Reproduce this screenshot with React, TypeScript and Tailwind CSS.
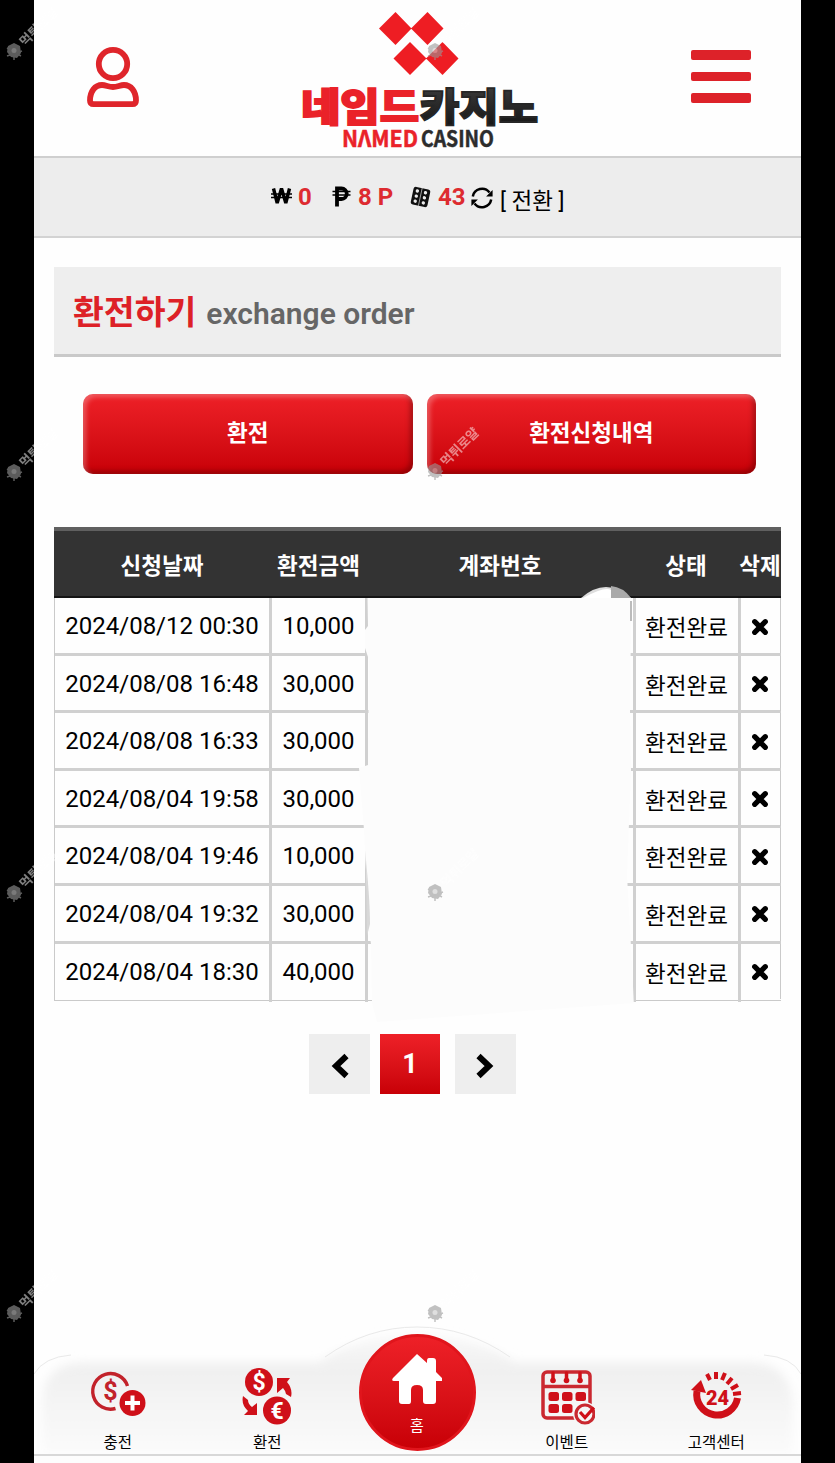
import type { ReactNode } from "react";

const orders = [
	{ date: "2024/08/12 00:30", amount: "10,000" },
	{ date: "2024/08/08 16:48", amount: "30,000" },
	{ date: "2024/08/08 16:33", amount: "30,000" },
	{ date: "2024/08/04 19:58", amount: "30,000" },
	{ date: "2024/08/04 19:46", amount: "10,000" },
	{ date: "2024/08/04 19:32", amount: "30,000" },
	{ date: "2024/08/04 18:30", amount: "40,000" },
];

export default function App() {
	return (
		<div className="relative h-[1463px] w-[835px] overflow-hidden bg-black pr-[34px] pl-[34px] font-['Roboto','Noto_Sans_CJK_KR',sans-serif] text-black">
			<div className="flex h-full w-[767px] flex-col bg-[#fefefe]">
				<Header />
				<BalanceBar />
				<main className="flex flex-1 flex-col pt-[29px] pr-5 pl-5">
					<div className="flex h-[90px] items-baseline border-b-3 border-[#c9c9c9] bg-[#eeeeee] pl-[19px] leading-[92px] whitespace-nowrap">
						<h1 className="text-[33.5px] font-bold text-[#dd2127]">환전하기</h1>
						<span className="ml-[10px] text-[30px] font-semibold text-[#666]">
							exchange order
						</span>
					</div>
					<div className="mt-[37px] flex gap-[14px] pl-[29px]">
						<RedButton>환전</RedButton>
						<RedButton>환전신청내역</RedButton>
					</div>
					<OrderTable />
					<Pagination />
				</main>
				<BottomNav />
			</div>

			<Watermark className="top-[-4px] left-[2px]" />
			<Watermark className="top-[417px] left-[2px]" />
			<Watermark className="top-[838px] left-[2px]" />
			<Watermark className="top-[1258px] left-[2px]" />
			<Watermark className="top-[-4px] left-[423px]" />
			<Watermark className="top-[416px] left-[423px]" />
			<Watermark className="top-[837px] left-[423px]" />
			<Watermark className="top-[1258px] left-[423px]" />
		</div>
	);
}

function Header() {
	return (
		<header className="flex h-[158px] items-start justify-between border-b-2 border-[#cfcfcf] pr-[50px] pl-[52px]">
			<svg
				className="mt-[46px] h-[62px] w-[54px]"
				viewBox="0 0 54 62"
				fill="none"
				stroke="#df252b"
			>
				<circle cx="27" cy="18" r="14.2" strokeWidth="5.8" />
				<path
					d="M4 54.5c0-9 5-15.5 12-15.5 4 0 6.5 2 11 2s7-2 11-2c7 0 12 6.5 12 15.5 0 2.5-1 3.7-3.5 3.7h-39c-2.5 0-3.5-1.2-3.5-3.7Z"
					strokeWidth="5.8"
				/>
			</svg>
			<Logo />
			<div className="mt-[50px] flex flex-col gap-3">
				<span className="h-[9.5px] w-[60px] rounded-xs bg-[#dd2229]" />
				<span className="h-[9.5px] w-[60px] rounded-xs bg-[#dd2229]" />
				<span className="h-[9.5px] w-[60px] rounded-xs bg-[#dd2229]" />
			</div>
		</header>
	);
}

function Logo() {
	return (
		<svg className="ml-[9px] h-[156px] w-[244px]" viewBox="298 0 244 156">
			<defs>
				<linearGradient id="logoDark" x1="0" y1="0" x2="0" y2="1">
					<stop offset="0" stopColor="#444" />
					<stop offset="0.5" stopColor="#2a2a2a" />
					<stop offset="1" stopColor="#111" />
				</linearGradient>
			</defs>
			<g fill="#ee1d23">
				<path d="m395.5 12 16 16.5-16 16.5-16.5-16.5ZM427.5 12l16 16.5-16 16.5-16.5-16.5Z" />
				<path d="m410 42 16.5 16.5L410 75l-16.5-16.5ZM442.5 42l16 16.5-16 16.5L426 58.5Z" />
			</g>
			<g
				fontFamily="'Noto Sans CJK KR', sans-serif"
				fontWeight="900"
				fontSize="39"
				strokeWidth="1.8"
			>
				<text
					x="301"
					y="121"
					textLength="118"
					lengthAdjust="spacingAndGlyphs"
					fill="#ea2229"
					stroke="#ea2229"
				>
					네임드
				</text>
				<text
					x="420"
					y="121"
					textLength="118"
					lengthAdjust="spacingAndGlyphs"
					fill="url(#logoDark)"
					stroke="#262626"
				>
					카지노
				</text>
			</g>
			<g
				fontFamily="'Noto Sans CJK KR', sans-serif"
				fontWeight="700"
				fontSize="22.5"
				strokeWidth="0.5"
			>
				<text
					x="342"
					y="146.5"
					textLength="76"
					lengthAdjust="spacingAndGlyphs"
					fill="#ea2229"
					stroke="#ea2229"
				>
					NΛMED
				</text>
				<text
					x="421"
					y="146.5"
					textLength="73"
					lengthAdjust="spacingAndGlyphs"
					fill="#2c2c2c"
					stroke="#2c2c2c"
				>
					CASINO
				</text>
			</g>
		</svg>
	);
}

function BalanceBar() {
	return (
		<div className="flex h-20 items-start border-b-2 border-[#d3d3d3] bg-[#ededed] pt-[23px] pl-[237px] text-[24px] leading-8 font-bold whitespace-nowrap">
			<WonIcon />
			<span className="ml-[6px] w-[34px] text-[#dd2b30]">0</span>
			<PesoIcon />
			<span className="ml-[7px] w-[52px] text-[#dd2b30]">8 P</span>
			<DiceIcon />
			<span className="ml-[7px] w-[33px] text-[#dd2b30]">43</span>
			<RefreshIcon />
			<span className="mt-[4px] ml-[7px] text-[22.5px] font-normal">
				[ 전환 ]
			</span>
		</div>
	);
}

function WonIcon() {
	return (
		<svg
			className="mt-[4px] h-[22px] w-[21px]"
			viewBox="0 0 21 22"
			fill="none"
			stroke="#000"
		>
			<path
				d="m2.5 3.5 3.7 14.5 4.3-14.5 4.3 14.5 3.7-14.5"
				strokeWidth="3.4"
				strokeLinejoin="bevel"
			/>
			<path d="M0 9h21M0 12.5h21" strokeWidth="1.6" />
		</svg>
	);
}

function PesoIcon() {
	return (
		<svg
			className="mt-[5px] h-[22px] w-[19px]"
			viewBox="0 0 19 22"
			fill="none"
			stroke="#000"
		>
			<path d="M5 20.5V2.5h4.5a4.7 4.7 0 0 1 0 10.5H5" strokeWidth="3.8" />
			<path d="M.5 5.5h18M.5 9h18" strokeWidth="1.6" />
		</svg>
	);
}

function DiceIcon() {
	return (
		<svg className="mt-[5px] h-[22px] w-[21px]" viewBox="0 0 21 22">
			<g transform="rotate(12 10.5 11)">
				<rect x="2" y="2" width="17" height="18" rx="2.5" fill="#111" />
				<path d="M10.3 2v18" stroke="#ededed" strokeWidth="0.6" />
				<g fill="#ededed">
					<circle cx="6.2" cy="5.8" r="1.7" />
					<circle cx="6.2" cy="11" r="1.7" />
					<circle cx="6.2" cy="16.2" r="1.7" />
					<circle cx="14.5" cy="5.8" r="1.7" />
					<circle cx="14.5" cy="11" r="1.7" />
					<circle cx="14.5" cy="16.2" r="1.7" />
				</g>
			</g>
		</svg>
	);
}

function RefreshIcon() {
	return (
		<svg className="mt-[6px] h-[22px] w-[22px]" viewBox="0 0 22 22">
			<path
				d="M1.8 9.5A9.4 9.4 0 0 1 18.5 5.5M20.2 12.5A9.4 9.4 0 0 1 3.5 16.5"
				fill="none"
				stroke="#000"
				strokeWidth="2.5"
			/>
			<path d="M21.6 3v6.500h-6.500ZM.4 19v-6.500h6.500Z" />
		</svg>
	);
}

function RedButton({ children }: { children: ReactNode }) {
	return (
		<button
			type="button"
			className="h-20 w-[329.5px] rounded-[10px] bg-linear-to-b from-[#ee2027] to-[#c80006] pb-[2px] text-[22.5px] leading-8 font-bold text-white shadow-[inset_3px_3px_5px_rgba(255,255,255,0.28),inset_-3px_-3px_5px_rgba(70,0,0,0.4)]"
		>
			{children}
		</button>
	);
}

function OrderTable() {
	return (
		<div className="relative mt-[53px]">
			<div className="grid h-[71px] grid-cols-[216px_97px_266px_106px_42px] items-center overflow-hidden border-t-4 border-b-2 border-t-[#606060] border-b-[#151515] bg-[#333] pt-1 text-center text-[22.5px] leading-8 font-bold whitespace-nowrap text-white">
				<span>신청날짜</span>
				<span>환전금액</span>
				<span>계좌번호</span>
				<span>상태</span>
				<span>삭제</span>
			</div>
			<div className="border-b border-l border-[#cacaca]">
				{orders.map((order, i) => (
					<div
						key={order.date}
						className={`grid grid-cols-[217px_96px_267.5px_105px_40.5px] text-center text-[24px] leading-[56px] whitespace-nowrap ${i < orders.length - 1 ? "h-[57.6px] border-b-3 border-[#d0d0d0]" : "h-[56.4px]"}`}
					>
						<span className="border-r-3 border-[#d0d0d0]">{order.date}</span>
						<span className="border-r-3 border-[#d0d0d0]">{order.amount}</span>
						<span className="border-r-3 border-[#d0d0d0]" />
						<span className="border-r-3 border-[#d0d0d0] pt-[2px] text-[22.5px]">
							환전완료
						</span>
						<span className="flex h-[55px] items-center justify-center border-r border-[#cacaca] pt-[2px]">
							<DeleteIcon />
						</span>
					</div>
				))}
			</div>
			<AccountMask />
		</div>
	);
}

function AccountMask() {
	return (
		<svg
			className="absolute top-[55px] left-[300px] h-[450px] w-[290px]"
			viewBox="354 582 290 450"
		>
			<path d="M581 598Q606 576 631 598Z" fill="#dedede" />
			<path d="M611 586q12 1 20 12h-20Z" fill="#aaa" />
			<path d="M583 598q22-12 28-8v8Z" fill="#fff" />
			<path
				d="M367.5 598H630l1 23-1 90 1 60-4 104 5 90 2 43v-5L377 1022 372 1003 371 944 369 930 364 830 359 768 368 765 369 660 365 648V630L368 626Z"
				fill="#fcfcfc"
			/>
			<path d="M366 860q4 42 4 64l-3 12Z" fill="#d8d8d8" />
			<path d="M630 601h2v20h-2Z" fill="#bbb" />
		</svg>
	);
}

function DeleteIcon() {
	return (
		<svg className="h-[18px] w-[18px]" viewBox="0 0 18 18">
			<path
				d="m3.7 3.7 10.6 10.6M14.3 3.7 3.7 14.3"
				stroke="#000"
				strokeWidth="5.2"
				strokeLinecap="round"
			/>
		</svg>
	);
}

function Pagination() {
	return (
		<div className="mt-[33px] flex h-[60px] pl-[255px]">
			<button
				type="button"
				className="flex w-[61px] items-center justify-center bg-[#eee]"
			>
				<svg className="mt-1 h-[26px] w-[18px]" viewBox="0 0 18 26" fill="none">
					<path d="M15.5 3 5 13l10.5 10" stroke="#000" strokeWidth="6" />
				</svg>
			</button>
			<button
				type="button"
				className="ml-[10px] w-[60px] bg-linear-to-b from-[#ee2027] to-[#c80006] text-[27px] font-bold text-white"
			>
				1
			</button>
			<button
				type="button"
				className="ml-[15px] flex w-[61px] items-center justify-center bg-[#eee] pr-[2px]"
			>
				<svg className="mt-1 h-[26px] w-[18px]" viewBox="0 0 18 26" fill="none">
					<path d="M2.5 3 13 13 2.5 23" stroke="#000" strokeWidth="6" />
				</svg>
			</button>
		</div>
	);
}

function BottomNav() {
	return (
		<nav className="relative h-[138px]">
			<NavBackground />
			<div className="relative flex h-[138px] items-end pr-[10px] pb-[9px] pl-[9px]">
				<NavItem label="충전">
					<DepositIcon />
				</NavItem>
				<NavItem label="환전">
					<ExchangeIcon />
				</NavItem>
				<div className="flex w-[150px] justify-center pb-[3px]">
					<div className="flex h-[117px] w-[117px] flex-col items-center rounded-full border-3 border-[#e0151c] bg-linear-to-b from-[#ee2027] to-[#c80006] pt-[17px]">
						<svg className="h-[50px] w-[50px]" viewBox="0 0 50 50" fill="#fff">
							<path d="M25 0 1 24q-2 3 1 3h5v20q0 3 3 3h7q2 0 2-3V36q0-5 6-5t6 5v11q0 3 3 3h7q3 0 3-3V27h5q3 0 1-3l-6-6V7q0-3-3-3h-4q-2 0-2 3v2Z" />
						</svg>
						<span className="mt-[12px] text-[15px] leading-5 text-white">
							홈
						</span>
					</div>
				</div>
				<NavItem label="이벤트">
					<EventIcon />
				</NavItem>
				<NavItem label="고객센터">
					<SupportIcon />
				</NavItem>
			</div>
		</nav>
	);
}

function NavItem({ label, children }: { label: string; children: ReactNode }) {
	return (
		<div className="flex w-[149.5px] flex-col items-center">
			{children}
			<span className="mt-[8px] mb-[1px] text-[15.5px] leading-5 whitespace-nowrap">
				{label}
			</span>
		</div>
	);
}

function NavBackground() {
	return (
		<svg className="absolute inset-0 h-[138px] w-[767px]" viewBox="0 0 767 138">
			<defs>
				<linearGradient id="navFill" x1="0" y1="0" x2="0" y2="1">
					<stop offset="0" stopColor="#f8f8f8" />
					<stop offset="0.3" stopColor="#f0f0f0" />
					<stop offset="1" stopColor="#fbfbfb" />
				</linearGradient>
				<filter id="navSoft">
					<feGaussianBlur stdDeviation="5" />
				</filter>
			</defs>
			<path
				d="M8 129V76Q10 38 50 37H285Q325 10 383 10t98 27H715q40 1 44 39v53Z"
				fill="url(#navFill)"
				filter="url(#navSoft)"
			/>
			<path
				d="M0 49Q10 32 37 30M730 30q28 2 37 19M291 32Q333 2 383 2t93 30"
				fill="none"
				stroke="#e9e9e9"
			/>
			<path d="M0 130h767" stroke="#d8d8d8" strokeWidth="2" />
			<path d="M0 131h767v7H0Z" fill="#fdfdfd" />
		</svg>
	);
}

function DepositIcon() {
	return (
		<svg className="h-[58px] w-[58px]" viewBox="0 0 58 58">
			<path
				d="M26.5 41.5A17.8 17.8 0 1 1 38.5 19"
				fill="none"
				stroke="#c2222a"
				strokeWidth="3.4"
			/>
			<text
				x="21.5"
				y="33"
				textAnchor="middle"
				fontSize="25"
				fontWeight="700"
				fontFamily="Roboto, sans-serif"
				fill="#c2222a"
			>
				$
			</text>
			<circle cx="43.5" cy="36" r="13" fill="#cf1019" />
			<path d="M43.5 28.5v15M36 36h15" stroke="#fff" strokeWidth="4" />
		</svg>
	);
}

function ExchangeIcon() {
	return (
		<svg className="h-[58px] w-[50px]" viewBox="0 0 50 58">
			<g
				textAnchor="middle"
				fontFamily="Roboto, sans-serif"
				fontWeight="700"
				fontSize="23"
				fill="#fff"
			>
				<circle cx="17" cy="15" r="14" fill="#cf1019" />
				<text x="17" y="23">
					$
				</text>
				<circle cx="35" cy="43.5" r="14" fill="#cf1019" />
				<text x="35" y="51.5">
					€
				</text>
			</g>
			<path
				d="M35 11h13l-3 4q6 7 4 15l-5-3q-1-4-3-6l-6 5ZM1 29l5 4q0 4 4 7l5-4v12H2l4-4Q-1 38 1 29Z"
				fill="#cf1019"
			/>
		</svg>
	);
}

function EventIcon() {
	return (
		<svg className="h-[58px] w-[56px]" viewBox="0 0 56 58" fill="none">
			<rect
				x="4"
				y="5"
				width="47"
				height="46"
				rx="4"
				stroke="#ca2830"
				strokeWidth="3.5"
			/>
			<path d="M4 19.5h47" stroke="#ca2830" strokeWidth="3.5" />
			<path
				d="M14 6v8M27.5 6v8M41 6v8"
				stroke="#cf1019"
				strokeWidth="3.5"
				strokeLinecap="round"
			/>
			<g fill="#cf1019">
				<circle cx="14" cy="13.5" r="2.8" />
				<circle cx="27.5" cy="13.5" r="2.8" />
				<circle cx="41" cy="13.5" r="2.8" />
				<rect x="9.5" y="25" width="10.5" height="9" rx="2.5" />
				<rect x="23" y="25" width="10.5" height="9" rx="2.5" />
				<rect x="36.5" y="25" width="10.5" height="9" rx="2.5" />
				<rect x="9.5" y="37" width="10.5" height="9" rx="2.5" />
				<rect x="23" y="37" width="10.5" height="9" rx="2.5" />
			</g>
			<circle cx="46" cy="47" r="12" fill="#f6f6f6" />
			<circle cx="46" cy="47" r="9" stroke="#ca2830" strokeWidth="3.2" />
			<path d="m41 45 5 5.5 9-10" stroke="#cf1019" strokeWidth="3.2" />
		</svg>
	);
}

function SupportIcon() {
	return (
		<svg className="h-[58px] w-[52px]" viewBox="0 0 52 58" fill="none">
			<path
				d="M7 24A20.5 20.5 0 1 0 47.5 31"
				stroke="#cf1019"
				strokeWidth="7"
			/>
			<path d="M1 23 11 13 16 26Z" fill="#cf1019" />
			<path
				d="m17 7 3 6M26 5v7M35 6l-3 7M42 11l-5 6M48 18l-7 4M51 26l-8 1"
				stroke="#cf1019"
				strokeWidth="4"
			/>
			<text
				x="27.5"
				y="37.5"
				textAnchor="middle"
				fontSize="20"
				fontWeight="900"
				fontFamily="Roboto, sans-serif"
				fill="#cf1019"
			>
				24
			</text>
		</svg>
	);
}

function Watermark({ className }: { className: string }) {
	return (
		<svg
			className={`pointer-events-none absolute h-[70px] w-[64px] overflow-visible ${className}`}
			viewBox="0 0 64 70"
		>
			<g fill="#999" opacity="0.6">
				<path d="m12 47 6 3 1 7-4 5-6-1-4-5 1-6Z" />
				<path
					d="m12 54 0 10M5 52l14 8M5 60l15-5"
					stroke="#999"
					strokeWidth="1.5"
				/>
				<circle cx="12" cy="54.5" r="2.5" fill="#ccc" />
			</g>
			<text
				transform="translate(23 51) rotate(-45)"
				fontFamily="'Noto Sans CJK KR', sans-serif"
				fontSize="13"
				fontWeight="700"
				fill="#fff"
				opacity="0.5"
			>
				먹튀로얄
			</text>
		</svg>
	);
}
